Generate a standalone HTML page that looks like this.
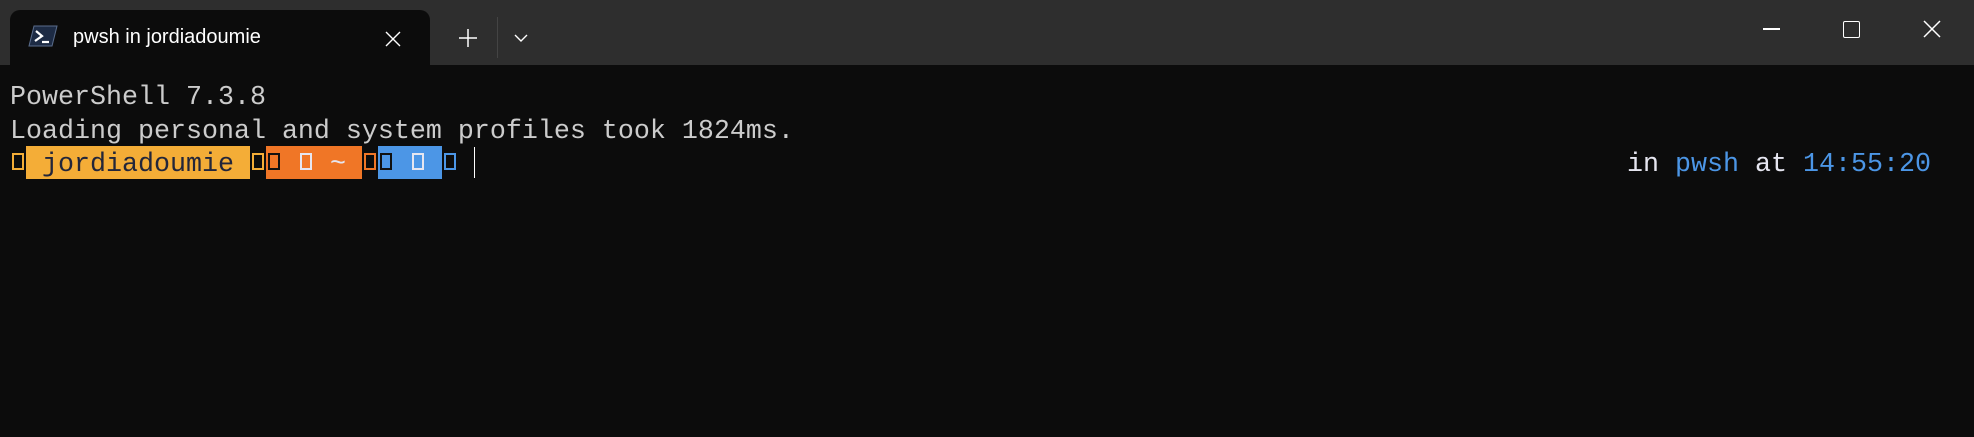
<!DOCTYPE html>
<html><head><meta charset="utf-8"><style>
body{margin:0;width:1974px;height:437px;background:#0c0c0c;overflow:hidden;position:relative;font-family:"Liberation Mono",monospace}
.bar{position:absolute;left:0;top:0;width:1974px;height:65px;background:#2e2e2e}
.tab{position:absolute;left:10px;top:10px;width:420px;height:60px;background:#0c0c0c;border-radius:10px 10px 0 0}
.title{position:absolute;left:73px;top:26px;font:20px "Liberation Sans",sans-serif;color:#fff}
.a{position:absolute}
.ln{position:absolute;left:10px;font-size:26.67px;line-height:33.5px;color:#cccccc;white-space:pre}
.bx{position:absolute;top:153px;width:8px;height:13px;border:2.5px solid}
.j{position:absolute;top:149px;font-size:26.67px;line-height:33px;white-space:pre}
</style></head><body>
<div class="bar"></div>
<div class="tab"></div>
<svg class="a" style="left:28px;top:24px" width="30" height="24" viewBox="0 0 30 24"><path d="M6 2H29L24 22H1Z" fill="#1d2b44" stroke="#5a6d8c" stroke-width="1"/><path d="M8 7L14 12L7 17" stroke="#fff" stroke-width="2.2" fill="none"/><path d="M14 18H21" stroke="#fff" stroke-width="2.2"/></svg>
<div class="title">pwsh in jordiadoumie</div>
<svg class="a" style="left:385px;top:31px" width="16" height="16"><path d="M1 1L15 15M15 1L1 15" stroke="#fff" stroke-width="1.4"/></svg>
<svg class="a" style="left:459px;top:29px" width="18" height="18"><path d="M9 0V18M0 9H18" stroke="#fff" stroke-width="1.5"/></svg>
<div class="a" style="left:497px;top:17px;width:1px;height:41px;background:#444"></div>
<svg class="a" style="left:514px;top:34px" width="14" height="9"><path d="M1 1L7 7L13 1" stroke="#fff" stroke-width="1.4" fill="none"/></svg>
<div class="a" style="left:1763px;top:28px;width:17px;height:1.5px;background:#fff"></div>
<div class="a" style="left:1843px;top:21px;width:15px;height:15px;border:1.5px solid #fff;border-radius:2px"></div>
<svg class="a" style="left:1923px;top:20px" width="18" height="18"><path d="M1 1L17 17M17 1L1 17" stroke="#fff" stroke-width="1.5"/></svg>

<div class="ln" style="top:82px">PowerShell 7.3.8</div>
<div class="ln" style="top:115.5px">Loading personal and system profiles took 1824ms.</div>

<div class="a" style="left:26px;top:146px;width:224px;height:33px;background:#f4ad37"></div>
<div class="a" style="left:266px;top:146px;width:96px;height:33px;background:#f07626"></div>
<div class="a" style="left:378px;top:146px;width:64px;height:33px;background:#4c96e6"></div>
<div class="j" style="left:26px;color:#23263a">&#32;jordiadoumie</div>
<div class="j" style="left:330px;color:#e6e6f0">~</div>
<div class="bx" style="left:12px;border-color:#f4ad37"></div>
<div class="bx" style="left:252px;border-color:#f4ad37"></div>
<div class="bx" style="left:268px;border-color:#111"></div>
<div class="bx" style="left:300px;border-color:#e6e6f0"></div>
<div class="bx" style="left:364px;border-color:#f07626"></div>
<div class="bx" style="left:380px;border-color:#111"></div>
<div class="bx" style="left:412px;border-color:#e6e6f0"></div>
<div class="bx" style="left:444px;border-color:#4c96e6"></div>
<div class="a" style="left:474px;top:147px;width:1px;height:31px;background:#fff"></div>

<div class="j" style="left:1627px;color:#e6e6f0">in <span style="color:#4c96e6">pwsh</span> at <span style="color:#4c96e6">14:55:20</span></div>
</body></html>
